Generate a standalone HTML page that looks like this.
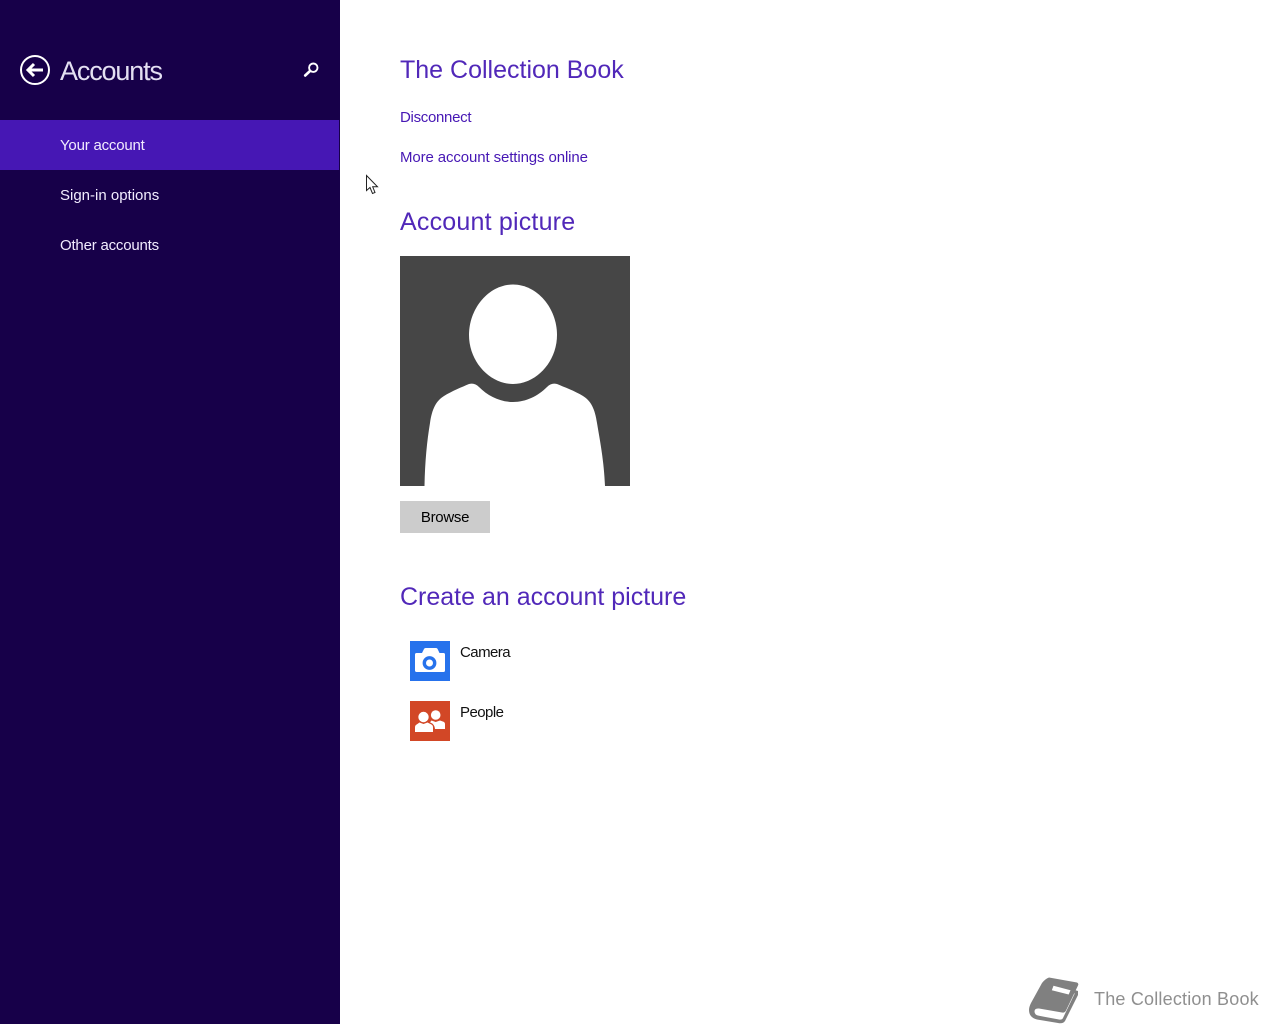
<!DOCTYPE html>
<html lang="en">
<head>
<meta charset="utf-8">
<title>Accounts</title>
<style>
html,body{margin:0;padding:0;width:1280px;height:1024px;overflow:hidden;background:#fff;font-family:"Liberation Sans",sans-serif}
.t{position:absolute;white-space:nowrap;line-height:20px}
#side{position:absolute;left:0;top:0;width:340px;height:1024px;background:#170049}
#sel{position:absolute;left:0;top:120px;width:339px;height:50px;background:#4617b4}
.h{color:#5128b9;font-size:25px;line-height:30px}
.l{color:#4617b4;font-size:15px;letter-spacing:-.11px}
.n{color:#f2ecff;font-size:15px;letter-spacing:-.2px}
.b{color:#111;font-size:15px;letter-spacing:-.55px}
#btn{position:absolute;left:400px;top:501px;width:90px;height:32px;background:#ccc;color:#000;font-size:15px;line-height:34px;text-align:center;letter-spacing:-.3px}
svg{position:absolute;display:block}
</style>
</head>
<body>
<div id="side"></div>
<div id="sel"></div>

<svg style="left:19px;top:54px" width="32" height="32" viewBox="0 0 32 32">
<circle cx="16" cy="16" r="14" fill="none" stroke="#fff" stroke-width="2"/>
<path d="M24 16H9M15 10l-6 6 6 6" fill="none" stroke="#fff" stroke-width="3"/>
</svg>
<div class="t" style="left:60px;top:55px;font-size:27px;line-height:32px;color:#e4e0f2;letter-spacing:-1.15px">Accounts</div>
<svg style="left:302px;top:61px" width="18" height="18" viewBox="0 0 18 18">
<circle cx="11.300" cy="6.700" r="4.200" fill="none" stroke="#fff" stroke-width="1.900"/>
<path d="M8 10L3.200 14.500" stroke="#fff" stroke-width="2.600" stroke-linecap="round"/>
</svg>

<div class="t n" style="left:60px;top:136px">Your account</div>
<div class="t n" style="left:60px;top:186px;letter-spacing:0">Sign-in options</div>
<div class="t n" style="left:60px;top:236px">Other accounts</div>

<svg style="left:365px;top:174px" width="15" height="22" viewBox="0 0 15 22">
<path d="M1.500 1.500V16.500L5 13.500L7.500 19.500L10 18.500L7.700 12.800H12.500Z" fill="#fff" stroke="#222" stroke-width="1"/>
</svg>

<div class="t h" style="left:400px;top:55px">The Collection Book</div>
<div class="t l" style="left:400px;top:108px;letter-spacing:-.3px">Disconnect</div>
<div class="t l" style="left:400px;top:148px">More account settings online</div>
<div class="t h" style="left:400px;top:207px;letter-spacing:.2px">Account picture</div>

<svg style="left:400px;top:256px" width="230" height="230" viewBox="0 0 230 230">
<rect width="230" height="230" fill="#464646"/>
<path d="M113 28.500C137 28.500 157 52 157 79C157 106 136 128 113 128C90 128 69 106 69 79C69 52 89 28.500 113 28.500Z" fill="#fff"/>
<path d="M24.500 230C25 205 27 185 30 167C32 153 36 145 44 140C52 135 62 131 69 128C73 127 76 128 79 131C88 140 100 146 113 146C126 146 138 140 147 131C150 128 153 127 157 128C164 131 175 135 183 140C191 145 195 153 197 167C200 185 204 205 205 230Z" fill="#fff"/>
</svg>

<div id="btn">Browse</div>

<div class="t h" style="left:400px;top:582px">Create an account picture</div>

<svg style="left:410px;top:641px" width="40" height="40" viewBox="0 0 40 40">
<rect width="40" height="40" fill="#2672ec"/>
<path d="M5 13.500C5 12.500 5.700 12 6.500 12H12L14 8C14.300 7.400 15 7 15.700 7H26C26.700 7 27.300 7.400 27.600 8L29.500 12H33.500C34.400 12 35 12.600 35 13.500V29.500C35 30.400 34.400 31 33.500 31H6.500C5.700 31 5 30.400 5 29.500Z" fill="#fff"/>
<circle cx="19.500" cy="22" r="5.200" fill="none" stroke="#2672ec" stroke-width="3.400"/>
</svg>
<div class="t b" style="left:460px;top:643px">Camera</div>

<svg style="left:410px;top:701px" width="40" height="40" viewBox="0 0 40 40">
<rect width="40" height="40" fill="#d24726"/>
<circle cx="25.700" cy="14" r="4.800" fill="#fff"/>
<path d="M21.500 19.500L25.700 21L30 19.500L33.500 20.800C34.500 21.300 35 22 35 23.300V28H25C24.700 25.500 23.700 23.300 21.800 22.300L20 21.300Z" fill="#fff"/>
<circle cx="13.500" cy="16" r="5.200" fill="#fff"/>
<path d="M5 31V26.500C5 25 5.600 24 7 23.300L9.500 21.500L13.500 23L17.500 21.500L21 23.300C22.500 24 23 25 23 26.500V31Z" fill="#fff"/>
</svg>
<div class="t b" style="left:460px;top:703px">People</div>

<svg style="left:1027px;top:974px" width="56" height="50" viewBox="0 0 56 50">
<path d="M22 3.500L50 8.500Q52 9.500 51 11.500L39 36.500Q38 39 35 38.500L12 34.500Q7.500 34 7.500 37.500Q7.500 41 12 41.800L32 45.500Q35 46 36 44L47.500 20V16L51 17V21L38 47Q36 50 31 49L10 45.500Q2 43.500 2 36Q2 33 4 29L15 9Q18 5 22 3.500Z" fill="#808080"/>
<path d="M26.500 11.700L43.500 16.200L41.700 20.500L24.800 16.200Z" fill="#fff"/>
</svg>
<div class="t" style="left:1094px;top:989px;font-size:18px;color:#8f8f8f;letter-spacing:.2px">The Collection Book</div>
</body>
</html>
